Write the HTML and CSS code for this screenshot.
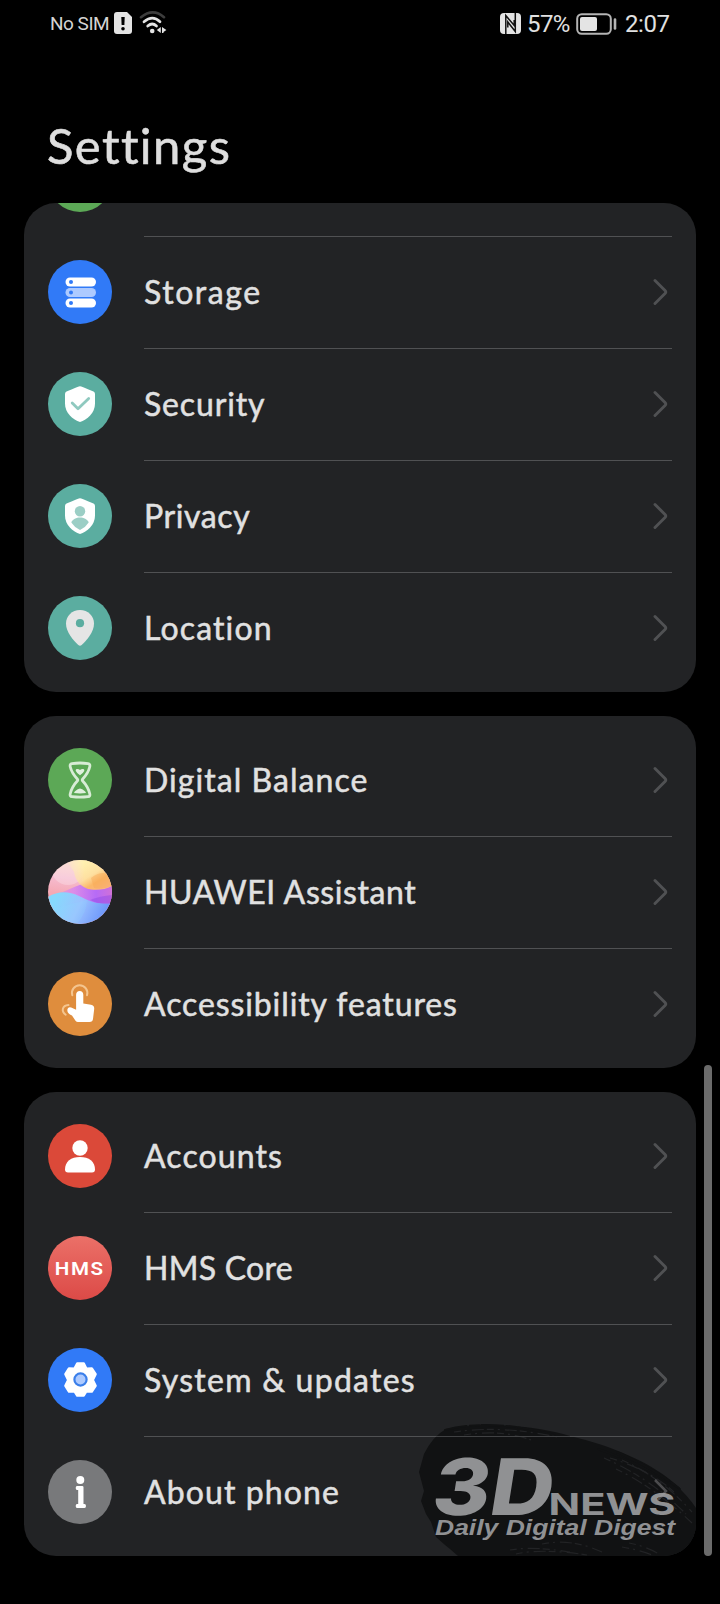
FILE: index.html
```html
<!DOCTYPE html>
<html lang="en">
<head>
<meta charset="utf-8">
<title>Settings</title>
<link rel="stylesheet" href="styles.css">
</head>
<body>
<svg class="defs" width="0" height="0" aria-hidden="true">
  <symbol id="chevron" viewBox="0 0 16 28"><path d="M3 2.5 13 12.4Q14.500 14 13 15.6L3 25.5" fill="none" stroke="#505153" stroke-width="2.9" stroke-linecap="round"/></symbol>
</svg>
<main class="screen">
  <div class="status">
    <div class="status-side">
      <span class="sim">No SIM</span>
      <svg class="sim-icon" width="18" height="22" viewBox="0 0 18 22"><path d="M3 0H13L18 5V19Q18 22 15 22H3Q0 22 0 19V3Q0 0 3 0Z" fill="#e4e4e4"/><path d="M7.3 5H10.7L10.4 13H7.6Z" fill="#000"/><circle cx="9" cy="16.7" r="1.8" fill="#000"/></svg>
      <svg class="wifi" width="28" height="24" viewBox="0 0 28 24"><g fill="none" stroke-linecap="round"><path d="M2 6.2Q14-3.4 25 6.2" stroke="#3d3d3d" stroke-width="2.6"/><path d="M5 10.8Q13.5 3.5 21 10.8" stroke="#e4e4e4" stroke-width="2.7"/><path d="M8.7 15Q13.3 11 17.5 15" stroke="#e4e4e4" stroke-width="2.7"/></g><circle cx="13.2" cy="20" r="2.3" fill="#e4e4e4"/><path d="M17.8 19 21.8 16V22ZM23 16 27.4 19 24.5 21V22H23Z" fill="#e4e4e4"/></svg>
    </div>
    <div class="status-side">
      <svg class="nfc" width="21" height="21" viewBox="0 0 21 21"><path d="M4 0H17Q21 0 21 4V17Q21 21 17 21H4Q0 21 0 17V4Q0 0 4 0Z" fill="#e4e4e4"/><path d="M5.800 21V2.500L14.200 12.500V7M15.300 0V18.500L7.800 9V14.500" fill="none" stroke="#111" stroke-width="1.500"/></svg>
      <span class="pct">57%</span>
      <svg class="battery" width="41" height="22" viewBox="0 0 41 22"><rect x="1.200" y="1.200" width="33.600" height="19.600" rx="4.500" fill="none" stroke="#b4b4b4" stroke-width="2"/><rect x="4" y="4" width="17" height="14" rx="2" fill="#e4e4e4"/><path d="M39 6.500V15.500" stroke="#b4b4b4" stroke-width="2.600" stroke-linecap="round"/></svg>
      <span class="clock">2:07</span>
    </div>
  </div>
  <h1 class="title">Settings</h1>

  <section class="card card-cut">
    <svg class="cut-icon" width="64" height="9" viewBox="0 0 64 9"><circle cx="32" cy="-23" r="32" fill="#5ca856"/></svg>
    <div class="row">
      <svg class="icon" viewBox="0 0 64 64"><circle cx="32" cy="32" r="32" fill="#317af7"/><rect x="17.500" y="17.500" width="30.500" height="9" rx="4.500" fill="#fff"/><rect x="17.500" y="28" width="30.500" height="9" rx="4.500" fill="#adcaff"/><rect x="17.500" y="38.500" width="30.500" height="9" rx="4.500" fill="#fff"/><g fill="#317af7"><circle cx="23" cy="22" r="2"/><circle cx="23" cy="32.500" r="2"/><circle cx="23" cy="43" r="2"/></g></svg>
      <div class="body"><span class="label storage">Storage</span><svg class="chev"><use href="#chevron"/></svg></div>
    </div>
    <div class="row">
      <svg class="icon" viewBox="0 0 64 64"><circle cx="32" cy="32" r="32" fill="#5bada0"/><path d="M32 14.200Q33 14.200 45.500 19.500Q47 20.200 47 22V31.500C47 41.500 39 47.500 32 50C25 47.500 17 41.500 17 31.500V22Q17 20.200 18.500 19.500Q31 14.200 32 14.200Z" fill="#fff"/><path d="M24.200 31 30 36.700 40.700 26.500" fill="none" stroke="#8fc9bf" stroke-width="2.800" stroke-linecap="round" stroke-linejoin="round"/></svg>
      <div class="body"><span class="label security">Security</span><svg class="chev"><use href="#chevron"/></svg></div>
    </div>
    <div class="row">
      <svg class="icon" viewBox="0 0 64 64"><circle cx="32" cy="32" r="32" fill="#5bada0"/><path d="M32 14.200Q33 14.200 45.500 19.500Q47 20.200 47 22V31.500C47 41.500 39 47.500 32 50C25 47.500 17 41.500 17 31.500V22Q17 20.200 18.500 19.500Q31 14.200 32 14.200Z" fill="#fff"/><circle cx="32" cy="27.300" r="5.200" fill="#9bcec5"/><path d="M23.300 38.500C26 31.800 38 31.800 40.700 38.500Q37.500 43.500 32 46Q26.500 43.500 23.300 38.500Z" fill="#9bcec5"/></svg>
      <div class="body"><span class="label privacy">Privacy</span><svg class="chev"><use href="#chevron"/></svg></div>
    </div>
    <div class="row">
      <svg class="icon" viewBox="0 0 64 64"><circle cx="32" cy="32" r="32" fill="#5bada0"/><path d="M32 14C24 14 18 20 18 27.500C18 36 25 44 30.300 49Q32 50.500 33.700 49C39 44 46 36 46 27.500C46 20 40 14 32 14Z" fill="#e5e5e5"/><circle cx="32" cy="27.200" r="4.100" fill="#5bada0"/></svg>
      <div class="body"><span class="label location">Location</span><svg class="chev"><use href="#chevron"/></svg></div>
    </div>
  </section>

  <section class="card">
    <div class="row">
      <svg class="icon" viewBox="0 0 64 64"><circle cx="32" cy="32" r="32" fill="#5ca856"/><path d="M24 15.600Q32 14.400 40 15.600Q42.500 16 41.700 19C40.300 25 37.500 28 34.500 31.200Q34 32 34.500 32.800C37.500 36 40.300 40 41.700 45.500Q42.500 48.400 40 48.700Q32 49.700 24 48.700Q21.500 48.400 22.300 45.500C23.700 40 26.500 36 29.500 32.800Q30 32 29.500 31.200C26.500 28 23.700 25 22.300 19Q21.500 16 24 15.600Z" fill="none" stroke="#d8ecd6" stroke-width="2.800"/><path d="M27.800 23C27 20.500 30.500 20.500 32 22C33.500 20.500 37 20.500 36.200 23Q35 25.500 32 27.300Q29 25.500 27.800 23ZM26 45Q27 42 32 40.500Q37 42 38 45Q32 45.800 26 45Z" fill="#e0f0de"/></svg>
      <div class="body"><span class="label digital">Digital Balance</span><svg class="chev"><use href="#chevron"/></svg></div>
    </div>
    <div class="row">
      <svg class="icon" viewBox="0 0 64 64">
        <defs>
          <clipPath id="orb"><circle cx="32" cy="32" r="32"/></clipPath>
          <linearGradient id="pink" x1=".5" y1="0" x2=".4" y2="1"><stop offset="0" stop-color="#fbd6c6"/><stop offset=".3" stop-color="#f6bcd0"/><stop offset=".55" stop-color="#f5a9b4"/></linearGradient>
          <linearGradient id="sun" gradientUnits="userSpaceOnUse" x1="38" y1="0" x2="56" y2="30"><stop offset="0" stop-color="#fff2b0"/><stop offset=".45" stop-color="#fee0a0"/><stop offset=".7" stop-color="#fbb768"/><stop offset="1" stop-color="#fbb98a"/></linearGradient>
          <linearGradient id="sunfade" x1="0" x2="1"><stop offset="0" stop-color="#fff" stop-opacity=".1"/><stop offset=".4" stop-color="#fff"/></linearGradient>
          <mask id="sunmask"><rect x="18" width="46" height="64" fill="url(#sunfade)"/></mask>
          <linearGradient id="violet" x1="0" y1="0" x2="1" y2="0"><stop offset="0" stop-color="#f5a3b4"/><stop offset=".4" stop-color="#dc8ce8"/><stop offset=".75" stop-color="#b66bf6"/><stop offset="1" stop-color="#d070d8"/></linearGradient>
          <linearGradient id="sea" x1=".1" y1=".3" x2=".9" y2=".5"><stop offset="0" stop-color="#86d9fd"/><stop offset=".5" stop-color="#9cc2fe"/><stop offset="1" stop-color="#709afb"/></linearGradient>
        </defs>
        <g clip-path="url(#orb)"><rect width="64" height="64" fill="url(#pink)"/><circle cx="20" cy="8" r="17" fill="#fff" opacity=".25"/><path d="M0 36C16 34 24 26 36 24C48 24 55 27 64 26V50H0Z" fill="url(#violet)"/><path d="M18 0H64V26Q54 31 43 29.500C33 28 27 20 26 12Z" fill="url(#sun)" mask="url(#sunmask)"/><path d="M43 18C50 12 57 12 64 15V26Q54 30 46 28Z" fill="#f7a44f" opacity=".4"/><path d="M0 37C10 31 20 31 31 36S48 45 64 43V64H0Z" fill="url(#sea)"/><path d="M42 40Q52 36 64 35V43Q52 45 42 40Z" fill="#914ce8" opacity=".5"/><path d="M39 40Q39 52 29 64H0V50Z" fill="#8bdcff" opacity=".2"/></g>
      </svg>
      <div class="body"><span class="label huawei">HUAWEI Assistant</span><svg class="chev"><use href="#chevron"/></svg></div>
    </div>
    <div class="row">
      <svg class="icon" viewBox="0 0 64 64"><circle cx="32" cy="32" r="32" fill="#df8d3d"/><g fill="none" stroke="#f4c58f" stroke-width="2" stroke-linecap="round"><path d="M24.300 23.300A7.700 7.700 0 1 1 39 23.300"/><path d="M20.500 33C14 33.500 13 39.500 17.700 42.800"/></g><path d="M31.700 19C33.900 19 35.300 20.500 35.300 22.700V31.500L43 32.700Q46.500 33.300 46.200 37L45 47Q44.700 50 41.500 50H30Q28.500 50 27.500 48.800L24 43.500Q18.500 41.500 19.500 37Q20.300 34.500 23.200 35.500L28.100 37.800V22.700C28.100 20.500 29.500 19 31.700 19Z" fill="#fff"/></svg>
      <div class="body"><span class="label access">Accessibility features</span><svg class="chev"><use href="#chevron"/></svg></div>
    </div>
  </section>

  <section class="card">
    <div class="row">
      <svg class="icon" viewBox="0 0 64 64"><circle cx="32" cy="32" r="32" fill="#db4939"/><circle cx="32" cy="24" r="7.700" fill="#fff"/><path d="M17 45.500C17 37.500 23 33 32 33S47 37.500 47 45.500Q47 48.500 44 48.500H20Q17 48.500 17 45.500Z" fill="#fff"/></svg>
      <div class="body"><span class="label accounts">Accounts</span><svg class="chev"><use href="#chevron"/></svg></div>
    </div>
    <div class="row">
      <svg class="icon" viewBox="0 0 64 64"><defs><linearGradient id="hms" x2="0" y2="1"><stop stop-color="#eb7068"/><stop offset="1" stop-color="#dc4a47"/></linearGradient></defs><circle cx="32" cy="32" r="32" fill="url(#hms)"/><text class="hms" x="6.800" y="39.300" textLength="50" lengthAdjust="spacingAndGlyphs">HMS</text></svg>
      <div class="body"><span class="label core">HMS Core</span><svg class="chev"><use href="#chevron"/></svg></div>
    </div>
    <div class="row">
      <svg class="icon" viewBox="0 0 64 64"><circle cx="32" cy="32" r="32" fill="#317af7"/><path d="M29.200 15.500H35.800L38.300 20.600L43.800 20.400L47.600 26.200L44.800 32L47.600 37.800L43.800 43.600L38.300 43.400L35.800 47.500H29.200L26.500 43.400L21 43.600L17.400 37.800L20.200 32L17.400 26.200L21 20.400L26.500 20.600Z" fill="#fff" stroke="#fff" stroke-width="2.400" stroke-linejoin="round"/><circle cx="32.500" cy="31.500" r="6.100" fill="#adcaff" stroke="#3b7fea" stroke-width="2.200"/></svg>
      <div class="body"><span class="label system">System &amp; updates</span><svg class="chev"><use href="#chevron"/></svg></div>
    </div>
    <div class="row">
      <svg class="icon" viewBox="0 0 64 64"><circle cx="32" cy="32" r="32" fill="#78797b"/><circle cx="32.300" cy="20" r="4" fill="#fff"/><path d="M29 26H34.200Q35.500 26 35.500 27.300V44H36.500Q38 44 38 46T36.500 48H29Q27.700 48 27.700 46T29 44H30.200V30H29Q27.700 30 27.700 28T29 26Z" fill="#fff"/></svg>
      <div class="body"><span class="label about">About phone</span><svg class="chev"><use href="#chevron"/></svg></div>
    </div>
    <svg class="watermark" width="284" height="136" viewBox="0 0 284 136">
      <path d="M34 9C70 2 123 5 158 16C200 26 238 42 262 63Q276 76 284 88V136H46L38 129L33 125L24 117L19 102L14 94L9 81L12 71L7 52L12 34Q21 16 34 9Z" fill="#111213"/>
      <g fill="none" stroke="#111213" stroke-width="2" stroke-linecap="round" stroke-dasharray="22 3 10 2"><path d="M33 10Q80-2 143 15"/><path d="M186 29Q235 46 268 69"/><path d="M205 32Q240 48 267 68"/></g>
      <g fill="none" stroke="#222325" stroke-width="1.200" stroke-dasharray="7 4 2 5 12 3"><path d="M42 12Q90 5 145 17"/><path d="M52 15Q90 9 119 20"/><path d="M192 38Q238 58 274 94"/><path d="M204 49Q242 67 280 103"/><path d="M198 38Q238 50 262 72"/><path d="M210 40Q250 58 280 92"/><path d="M98 130Q120 126 158 132"/><path d="M104 134Q130 128 175 135"/><path d="M130 124Q160 118 190 132"/><path d="M217 123Q233 126 247 134"/><path d="M210 127Q228 130 240 135"/></g>
      <path d="M24 16.500H158" stroke="#414244" stroke-width="1"/><path d="M158 16.500H260" stroke="#505153" stroke-width="1"/>
      <g fill="#909193">
        <text class="logo-3d" transform="translate(17.500 95) skewX(-9)" textLength="121" lengthAdjust="spacingAndGlyphs">3D</text>
        <text class="logo-news" x="136.500" y="95" textLength="127" lengthAdjust="spacingAndGlyphs">NEWS</text>
        <text class="logo-daily" x="23" y="114.500" textLength="240" lengthAdjust="spacingAndGlyphs">Daily Digital Digest</text>
      </g>
      <path d="M243 60 254 71 245 81" fill="none" stroke="#a2a3a5" stroke-opacity=".4" stroke-width="2.500"/>
    </svg>
  </section>
  <div class="scrollbar"></div>
</main>
</body>
</html>
```
FILE: styles.css
```css
* { box-sizing: border-box; }
body { margin: 0; background: #000; color: #e1e1e1; font-family: Lato, "Noto Sans", sans-serif; }
.defs { position: absolute; }
.screen { position: relative; width: 720px; height: 1604px; padding: 0 24px; overflow: hidden; background: #000; }
.status { display: flex; justify-content: space-between; height: 48px; padding: 0 26px; }
.status-side { display: flex; align-items: center; font-family: Roboto, sans-serif; }
.sim { width: 64px; margin-top: -2px; font-size: 19px; letter-spacing: -.5px; white-space: nowrap; color: #d4d4d4; }
.sim-icon { margin-top: -2px; }
.wifi { margin: -2px 0 0 7px; }
.nfc { margin-right: 6px; margin-top: -2px; }
.pct { width: 49px; font-size: 24px; letter-spacing: -.6px; }
.battery { margin-top: -1px; }
.clock { width: 45px; margin-left: 8px; font-size: 24px; letter-spacing: -.4px; }
.title { height: 155px; margin: 0; padding: 66px 0 0 23px; font-size: 49px; line-height: 62px; font-weight: 400; letter-spacing: 1.4px; -webkit-text-stroke: .6px #dedede; color: #dedede; }
.card { position: relative; margin-bottom: 24px; padding: 8px 24px; border-radius: 32px; background: #222325; overflow: hidden; }
.card-cut { padding-top: 0; }
.cut-icon { display: block; margin-bottom: 24px; }
.row { display: flex; align-items: center; height: 112px; }
.icon { flex: none; width: 64px; height: 64px; margin-right: 32px; }
.body { display: flex; flex: 1; align-items: center; justify-content: space-between; height: 112px; padding: 0 4px 0 0; }
.row + .row .body, .card-cut .body { box-shadow: inset 0 1px #505153; }
.chev { width: 16px; height: 28px; }
.label { font-size: 32px; line-height: 40px; white-space: nowrap; -webkit-text-stroke: .5px #e1e1e1; }
.storage { letter-spacing: 1.55px; }
.security { letter-spacing: .85px; }
.privacy { letter-spacing: .6px; }
.location { letter-spacing: 1.15px; }
.digital { letter-spacing: 1.05px; }
.huawei { letter-spacing: .6px; }
.access { letter-spacing: .9px; }
.accounts { letter-spacing: 1.1px; }
.core { letter-spacing: .25px; }
.system { letter-spacing: 1.25px; }
.about { letter-spacing: 1.1px; }
.hms { font: 600 19px Roboto, sans-serif; letter-spacing: 1.5px; fill: #fff; }
.watermark { position: absolute; right: 0; bottom: 0; }
.logo-3d { font: 800 78px Inter, sans-serif; }
.logo-news { font: 700 30px Inter, sans-serif; }
.logo-daily { font: italic 700 21.5px "Liberation Sans", sans-serif; }
.scrollbar { position: absolute; left: 704px; top: 1065px; width: 8px; height: 491px; border-radius: 4px; background: #6b6b6b; }
```
